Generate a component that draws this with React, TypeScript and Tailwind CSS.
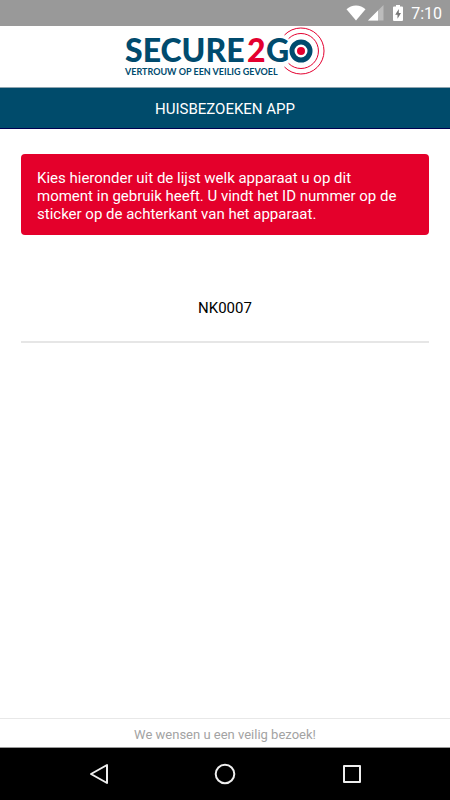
const devices = ["NK0007"];

function StatusBar() {
  return (
    <div className="flex h-[26px] shrink-0 items-center justify-end bg-[#999999] pr-2 text-white">
      <svg className="h-[16px] w-[20px]" viewBox="0 0 20 16" aria-hidden="true">
        <path d="M10 15.5 0.5 4.2C3 2 6.300 0.500 10 0.500S17 2 19.500 4.200Z" fill="currentColor" />
      </svg>
      <svg className="ml-[2px] h-[16px] w-[16px]" viewBox="0 0 16 16" aria-hidden="true">
        <path d="M0 15.500 15.500 0V15.500Z" fill="currentColor" opacity="0.35" />
        <path d="M0 15.500 10 5.500V15.500Z" fill="currentColor" />
      </svg>
      <svg className="ml-[9px] h-[16px] w-[10px]" viewBox="0 0 10 16" aria-hidden="true">
        <path d="M3 0H7V1.500H9Q10 1.500 10 2.500V15Q10 16 9 16H1Q0 16 0 15V2.500Q0 1.500 1 1.500H3Z" fill="currentColor" />
        <path d="M5.800 4 2.200 9.700H4.500V13.800L8 8H5.800Z" fill="#777777" />
      </svg>
      <time className="ml-[8px] pt-[2px] text-base leading-5">7:10</time>
    </div>
  );
}

function Logo() {
  return (
    <svg className="h-[50px] w-[202px]" viewBox="0 0 202 50" role="img" aria-label="Secure2Go">
      <g fontFamily="Lato, sans-serif" fontWeight="900" fontSize="32">
        <text x="1" y="35" fill="#004b6e">SECURE</text>
        <text x="123" y="35" fill="#e4002f">2</text>
        <text x="142" y="35" fill="#004b6e">G</text>
      </g>
      <text x="1" y="48" fill="#004b6e" fontFamily="Lato, sans-serif" fontWeight="700" fontSize="9">
        VERTROUW OP EEN VEILIG GEVOEL
      </text>
      {/* Target that forms the last letter */}
      <circle cx="177" cy="24" r="9" fill="#ffffff" stroke="#004b6e" strokeWidth="5" />
      <circle cx="177" cy="24" r="4" fill="#e4002f" />
      <g fill="none" stroke="#e4002f" strokeWidth="1">
        <path d="M164.600 11.600A17.500 17.500 0 1 1 164.600 36.400" />
        <path d="M160.500 8A23 23 0 1 1 160.500 40" />
      </g>
    </svg>
  );
}

function NavBar() {
  return (
    <nav className="grid h-[53px] shrink-0 grid-cols-[1fr_80px_1fr] items-center border-t border-[#999999] bg-black px-3 text-[#eeeeee]">
      <button type="button" aria-label="Terug" className="justify-self-center">
        <svg className="h-[22px] w-[22px]" viewBox="0 0 22 22" fill="none" stroke="currentColor" strokeWidth="2" strokeLinejoin="round">
          <path d="M19 2V20L3 11Z" />
        </svg>
      </button>
      <button type="button" aria-label="Start" className="justify-self-center">
        <svg className="h-[22px] w-[22px]" viewBox="0 0 22 22" fill="none" stroke="currentColor" strokeWidth="2">
          <circle cx="11" cy="11" r="9.300" />
        </svg>
      </button>
      <button type="button" aria-label="Recente apps" className="justify-self-center">
        <svg className="h-[22px] w-[22px]" viewBox="0 0 22 22" fill="none" stroke="currentColor" strokeWidth="2" strokeLinejoin="round">
          <path d="M3 3H19V19H3Z" />
        </svg>
      </button>
    </nav>
  );
}

export default function App() {
  return (
    <div className="flex min-h-screen flex-col bg-white font-[Roboto,sans-serif]">
      <StatusBar />
      <header>
        <div className="flex h-[61px] justify-center pt-px">
          <Logo />
        </div>
        <div className="flex h-[42px] items-center justify-center border-t border-b border-t-[#8fa5b0] border-b-[#000050] bg-[#004b6b] pt-px">
          <h1 className="text-[15px] leading-5 text-white">HUISBEZOEKEN APP</h1>
        </div>
      </header>

      <main className="flex-1 px-[21px] pt-[25px]">
        <p className="rounded bg-[#e4002b] pt-[15px] pr-6 pb-3 pl-4 text-[15px] leading-[18px] text-white">
          Kies hieronder uit de lijst welk apparaat u op dit moment in gebruik heeft. U vindt het ID nummer op de
          sticker op de achterkant van het apparaat.
        </p>
        <ul className="mt-[38px]">
          {devices.map((id) => (
            <li key={id} className="border-b-2 border-[#e6e6e6]">
              <button type="button" className="h-[68px] w-full pt-[2px] text-[15px] text-black">
                {id}
              </button>
            </li>
          ))}
        </ul>
      </main>

      <footer className="border-t border-[#e8e8e8] pt-[5px] pb-[2px] text-center text-[13px] leading-[21px] text-[#a3a3a3]">
        We wensen u een veilig bezoek!
      </footer>
      <NavBar />
    </div>
  );
}
